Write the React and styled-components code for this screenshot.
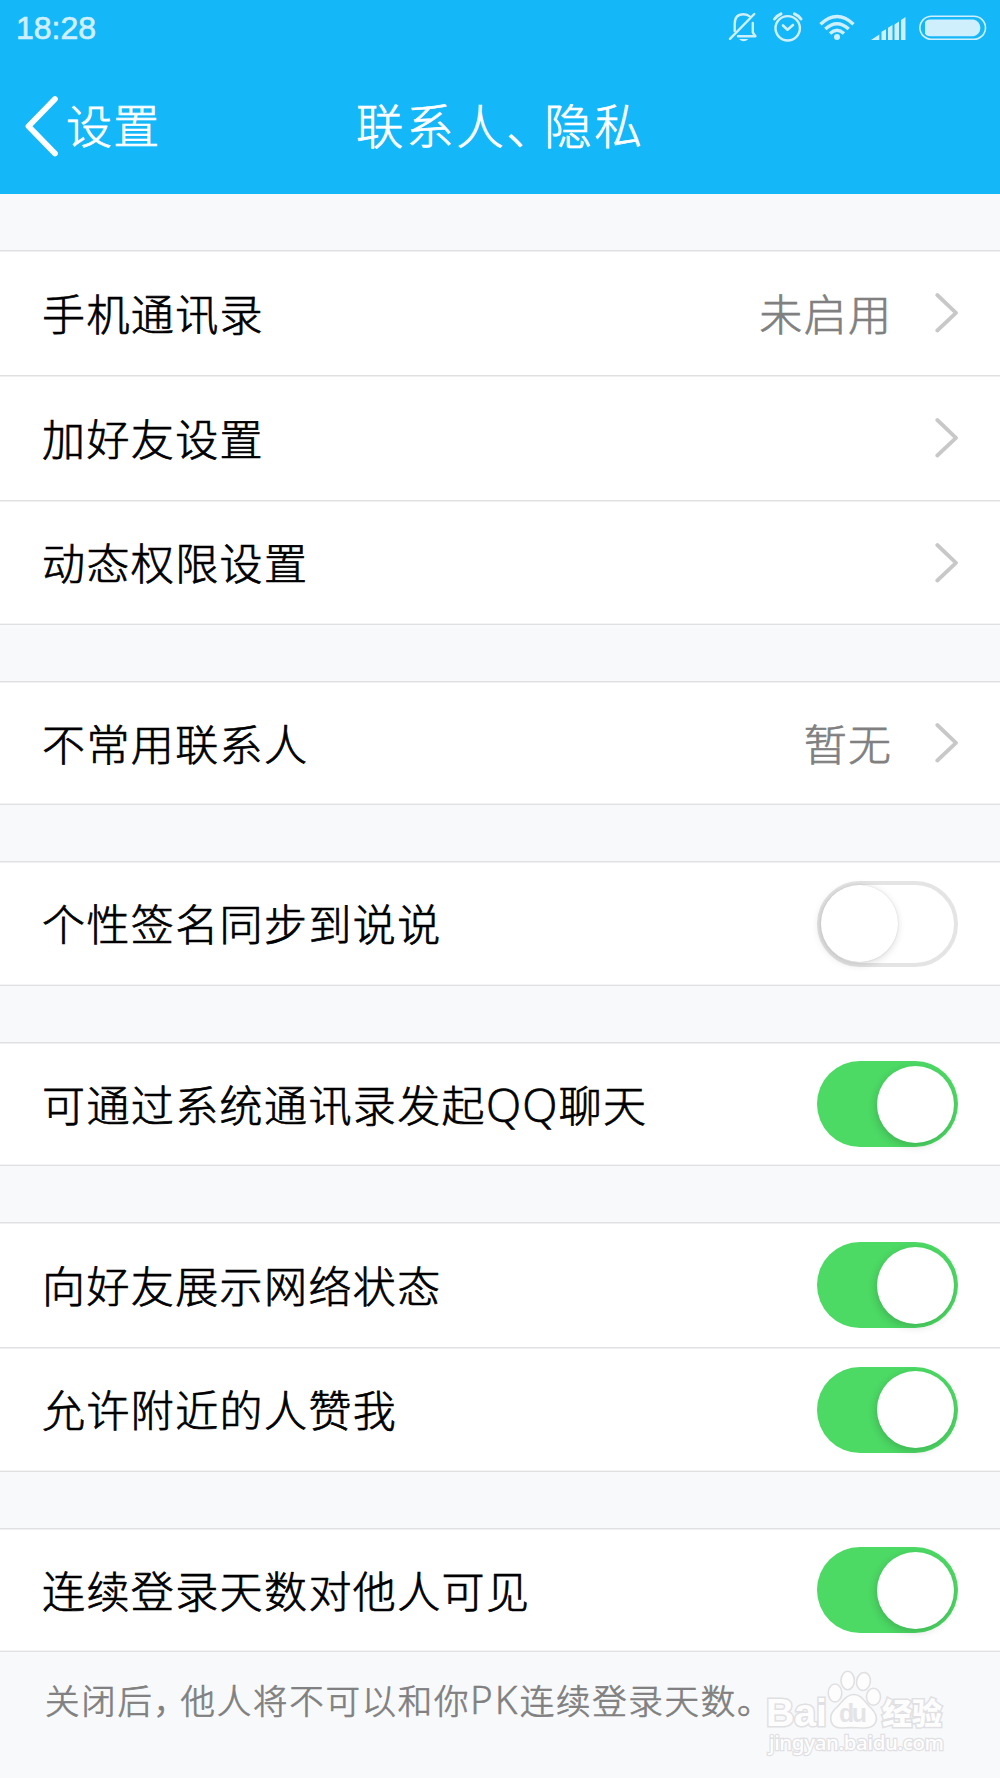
import React from 'react';
import styled, { createGlobalStyle } from 'styled-components';

const rows = [
  [{ label: '手机通讯录', value: '未启用' }, { label: '加好友设置' }, { label: '动态权限设置' }],
  [{ label: '不常用联系人', value: '暂无' }],
  [{ label: '个性签名同步到说说', toggle: true, on: false }],
  [{ label: '可通过系统通讯录发起', latin: 'QQ', rest: '聊天', toggle: true, on: true }],
  [
    { label: '向好友展示网络状态', toggle: true, on: true },
    { label: '允许附近的人赞我', toggle: true, on: true },
  ],
  [{ label: '连续登录天数对他人可见', toggle: true, on: true }],
];

const StatusIcons = () => (
  <IconsStyle width='275' height='56' viewBox='725 0 275 56' fill='none' stroke='#d0effd'>
    {/* muted bell */}
    <g strokeWidth='2.4' strokeLinecap='round' strokeLinejoin='round'>
      <path d='M738 36.2 H755.4 L752.8 32.5 V23' />
      <path d='M734.7 31 V24 Q734.7 14.3 743.5 14.3 Q747.5 14.3 749.8 16.5' />
      <path d='M754.3 14 L730 38.8' />
    </g>
    <path d='M739 39 H748.5 Q743.5 43.6 739 39 Z' fill='#d0effd' stroke='none' />
    {/* alarm clock */}
    <circle cx='787.7' cy='28.3' r='12.2' strokeWidth='2.4' />
    <path
      d='M783 25.5 L787.5 29.7 L793 25'
      strokeWidth='2.6'
      strokeLinecap='round'
      strokeLinejoin='round'
    />
    <path d='M774.5 19 Q777 15.5 781 13.8 M794.5 13.8 Q798.8 15.5 801 19' strokeWidth='3' strokeLinecap='round' />
    {/* wifi */}
    <g strokeWidth='3.4'>
      <path d='M820.5 24.2 Q837 8.8 853.5 24.2' />
      <path d='M825.3 29 Q837 18.4 848.7 29' />
      <path d='M830 33.4 Q837 27.2 844 33.4' />
    </g>
    <circle cx='837' cy='37' r='3' fill='#d0effd' stroke='none' />
    {/* signal */}
    <g fill='#d0effd' stroke='none'>
      <path d='M871 40 L879.3 34.6 V40 Z' />
      <path d='M881.5 40 V31.8 L886 29.3 V40 Z' />
      <path d='M888 40 V27.8 L892.5 25 V40 Z' />
      <path d='M894.5 40 V24.5 L899 21.5 V40 Z' />
      <path d='M901 40 V20 L905.5 17 V40 Z' />
    </g>
    {/* battery */}
    <rect x='919.9' y='16.3' width='65.6' height='23' rx='11.5' strokeWidth='1.6' />
    <path
      d='M925 22.5 Q926 19.5 930 19.5 H973.5 A8.5 8.5 0 0 1 973.5 36.2 H930 Q926 36.2 925 33.2 Z'
      fill='#d0effd'
      stroke='none'
    />
  </IconsStyle>
);

const Watermark = () => (
  <WatermarkStyle width='190' height='95' viewBox='760 1665 190 95' stroke='#e0e0e2' strokeWidth='1.6' fill='#fdfdfe'>
    <g paintOrder='stroke' strokeWidth='3'>
      <text x='766' y='1726' fontSize='39' fontWeight='700' textLength='61' lengthAdjust='spacingAndGlyphs'>Bai</text>
      <text x='882' y='1724' fontSize='30' fontWeight='900' textLength='60' className='cjk'>经验</text>
      <text x='769' y='1750' fontSize='20.5' textLength='175' strokeWidth='2.4' className='url'>jingyan.baidu.com</text>
    </g>
    <ellipse cx='835' cy='1693' rx='6.8' ry='9' />
    <ellipse cx='847.7' cy='1680.5' rx='6.7' ry='9.3' />
    <ellipse cx='863.5' cy='1681.5' rx='6.9' ry='9' transform='rotate(10 863.5 1681.5)' />
    <ellipse cx='873.5' cy='1696.7' rx='7' ry='8.5' />
    <path d='M854 1694.5 C862 1694.5 865 1703 871 1708 C881 1718 876 1728 865 1728 C857 1728 850 1727 843 1728 C829 1729 828 1716 835 1709 C842 1703 845 1694.5 854 1694.5 Z' />
    <text x='839' y='1722' fontSize='25' fontWeight='700' textLength='28' fill='#e4e4e6' stroke='none'>du</text>
  </WatermarkStyle>
);

const Arrow = () => (
  <ArrowStyle width='24' height='42' viewBox='0 0 24 42' fill='none' stroke='#c8c8c8' strokeWidth='3.8'>
    <path d='M2.3 3 L21 20.8 L2.3 38.5' strokeLinecap='round' strokeLinejoin='round' />
  </ArrowStyle>
);

const App = () => (
  <PageStyle>
    <GlobalStyle />
    <HeaderStyle>
      <StatusBarStyle>
        <TimeStyle>18:28</TimeStyle>
        <StatusIcons />
      </StatusBarStyle>
      <NavStyle>
        <BackStyle>
          <svg width='36' height='66' viewBox='0 0 36 66' fill='none' stroke='#fff' strokeWidth='5.8'>
            <path d='M31 5 L4.5 32.3 L31 59.5' strokeLinecap='round' strokeLinejoin='round' />
          </svg>
          <span>设置</span>
        </BackStyle>
        <TitleStyle>
          联系人<i>、</i>隐私
        </TitleStyle>
      </NavStyle>
    </HeaderStyle>
    {rows.map((group, index) => (
      <GroupStyle key={index}>
        {group.map((row) => (
          <RowStyle key={row.label}>
            <LabelStyle>
              {row.label}
              {row.latin && <b>{row.latin}</b>}
              {row.rest}
            </LabelStyle>
            {row.value && <ValueStyle>{row.value}</ValueStyle>}
            {row.toggle ? (
              <SwitchStyle $on={row.on}>
                <KnobStyle $on={row.on} />
              </SwitchStyle>
            ) : (
              <Arrow />
            )}
          </RowStyle>
        ))}
      </GroupStyle>
    ))}
    <FooterStyle>
      <HintStyle>
        关闭后<i>，</i>他人将不可以和你<b>PK</b>连续登录天数。
      </HintStyle>
      <Watermark />
    </FooterStyle>
  </PageStyle>
);

const GlobalStyle = createGlobalStyle`
  * {
    box-sizing: border-box;
  }
  body {
    margin: 0;
    background: #f8f9fb;
  }
`;

const PageStyle = styled.div`
  width: 1000px;
  height: 1778px;
  overflow: hidden;
  background: #f8f9fb;
  font-family: 'Noto Sans CJK SC', sans-serif;
  font-weight: 300;
  white-space: nowrap;
  -webkit-text-stroke: 0.7px currentColor;
`;

const HeaderStyle = styled.header`
  height: 194px;
  background: #14b7f7;
  color: #fff;
`;

const StatusBarStyle = styled.div`
  height: 56px;
  display: flex;
  justify-content: space-between;
`;

const TimeStyle = styled.span`
  padding-left: 16px;
  font: 400 32px/57px 'Liberation Sans', sans-serif;
  color: #d0effd;
`;

const IconsStyle = styled.svg`
  display: block;
`;

const NavStyle = styled.div`
  height: 138px;
  display: grid;
  grid-template-columns: 356px 1fr;
`;

const BackStyle = styled.div`
  display: flex;
  align-items: flex-start;
  padding: 38px 0 0 24px;
  svg {
    flex: none;
  }
  span {
    margin: -3px 0 0 6px;
    font-size: 46px;
    line-height: 64px;
    letter-spacing: 1.3px;
  }
`;

const TitleStyle = styled.h1`
  margin: 0;
  padding-top: 35px;
  font-size: 47.5px;
  font-weight: 300;
  line-height: 65px;
  letter-spacing: 2.6px;
  i {
    display: inline-block;
    width: 38px;
    font-style: normal;
    font-feature-settings: 'halt';
  }
`;

const GroupStyle = styled.section`
  margin-top: 56px;
  border-top: 1px solid #e0e0e2;
`;

const RowStyle = styled.div`
  height: 125px;
  padding: 0 42px;
  display: flex;
  align-items: center;
  background: #fff;
  border-bottom: 1px solid #e0e0e2;
  box-shadow: inset 0 1px #f0f0f2;
  &:last-child {
    height: 123.5px;
    padding-top: 1px;
    box-shadow: inset 0 1px #f0f0f2, inset 0 -1px #f4f4f5;
  }
`;

const LabelStyle = styled.span`
  flex: 1;
  margin-top: -3px;
  color: #000;
  font-size: 43px;
  line-height: 64px;
  letter-spacing: 1.4px;
  b {
    font-family: 'Open Sans', sans-serif;
    font-size: 46px;
    font-weight: 300;
    line-height: 1;
    letter-spacing: 1.2px;
  }
`;

const ValueStyle = styled.span`
  margin: -3px 42.5px 0 0;
  color: #808080;
  font-size: 43px;
  line-height: 64px;
  letter-spacing: 1.4px;
`;

const ArrowStyle = styled.svg`
  flex: none;
  margin-right: -1px;
`;

const SwitchStyle = styled.div`
  width: 141.5px;
  height: 86px;
  padding: ${({ $on }) => ($on ? '4.5px' : '0')};
  display: flex;
  align-items: center;
  justify-content: ${({ $on }) => ($on ? 'flex-end' : 'flex-start')};
  border: ${({ $on }) => ($on ? 'none' : '4px solid #e4e4e4')};
  border-radius: 43px;
  background: ${({ $on }) => ($on ? '#4cd964' : '#fff')};
`;

const KnobStyle = styled.div`
  width: 77px;
  height: 77px;
  border-radius: 50%;
  background: #fff;
  box-shadow: ${({ $on }) =>
    $on ? '-1px 3px 9px rgba(0, 0, 0, 0.17)' : '0 0 2px rgba(0, 0, 0, 0.12), -1px 2px 8px rgba(0, 0, 0, 0.16)'};
`;

const FooterStyle = styled.footer`
  display: flex;
  align-items: flex-start;
  padding: 13px 0 0 45px;
`;

const HintStyle = styled.p`
  width: 715px;
  margin: 9px 0 0;
  color: #808080;
  font-size: 34.5px;
  line-height: 50px;
  letter-spacing: 1.7px;
  i {
    display: inline-block;
    width: 27px;
    font-style: normal;
    font-feature-settings: 'halt';
  }
  b {
    font-family: 'Open Sans', sans-serif;
    font-size: 38px;
    font-weight: 300;
    line-height: 1;
    letter-spacing: 2.6px;
  }
`;

const WatermarkStyle = styled.svg`
  flex: none;
  font-family: 'Liberation Sans', sans-serif;
  -webkit-text-stroke: 0;
  .cjk {
    font-family: 'Noto Sans CJK SC', sans-serif;
  }
  .url {
    font-family: 'Noto Sans', sans-serif;
    font-weight: 500;
  }
`;

export default App;
